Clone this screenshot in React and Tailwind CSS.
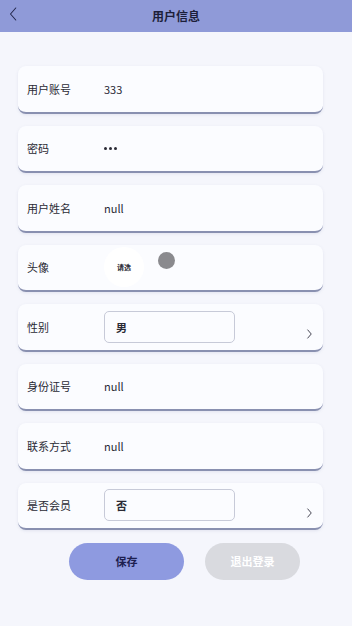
import React from "react";

const font = { fontFamily: '"Noto Sans CJK SC", "Noto Sans", sans-serif' };

function Chevron({ dir = "right", className = "", width = 1.6 }) {
  return (
    <svg viewBox="0 0 12 20" className={className} fill="none" stroke="currentColor" strokeWidth={width} strokeLinecap="round" strokeLinejoin="round">
      {dir === "right" ? <path d="M3 3l6 7-6 7" /> : <path d="M9 2L2 10l7 8" />}
    </svg>
  );
}

function Card({ label, children, arrow }) {
  return (
    <div className="relative h-[47.5px] rounded-[8px] bg-[#fbfcff] border-b-2 border-[#8990b0] shadow-[0_1px_3px_rgba(120,130,170,0.15)] flex items-center pl-[9px]">
      <span className="w-[77px] shrink-0 text-[11px] text-[#2a2a35]">{label}</span>
      <div className="flex-1 flex items-center text-[11px] text-[#2a2a35]">{children}</div>
      {arrow && <Chevron className="absolute right-[10px] top-[24px] w-[7px] h-[12px] text-[#3a3a48]" />}
    </div>
  );
}

function SelectBox({ value }) {
  return (
    <div className="w-[131px] h-[32px] rounded-[5px] border border-[#c7cad8] bg-[#fbfcff] flex items-center pl-[11px] text-[11px] font-bold text-[#2a2a35]">
      {value}
    </div>
  );
}

export default function App() {
  return (
    <div className="w-[352px] h-[626px] bg-[#f5f6fc] flex flex-col" style={font}>
      <div className="relative h-[32px] bg-[#8f9ad8] flex items-center justify-center shrink-0">
        <Chevron dir="left" width={1.4} className="absolute left-[9px] top-[6px] w-[9px] h-[16px] text-[#22254a]" />
        <span className="text-[12px] font-bold text-[#1d1f3a]">用户信息</span>
      </div>

      <div className="flex flex-col gap-[12px] px-[18px] mt-[34px] w-[341px]">
        <Card label="用户账号">333</Card>
        <Card label="密码">
          <div className="flex gap-[2px]">
            <span className="w-[3px] h-[3px] rounded-full bg-[#2a2a35]" />
            <span className="w-[3px] h-[3px] rounded-full bg-[#2a2a35]" />
            <span className="w-[3px] h-[3px] rounded-full bg-[#2a2a35]" />
          </div>
        </Card>
        <Card label="用户姓名">null</Card>
        <Card label="头像">
          <div className="w-[40px] h-[40px] rounded-full bg-white flex items-center justify-center text-[7px] font-bold text-[#2a2a35]">请选</div>
          <div className="ml-[14px] mb-[14px] w-[17px] h-[17px] rounded-full bg-[#8a8a8e]" />
        </Card>
        <Card label="性别" arrow><SelectBox value="男" /></Card>
        <Card label="身份证号">null</Card>
        <Card label="联系方式">null</Card>
        <Card label="是否会员" arrow><SelectBox value="否" /></Card>
      </div>

      <div className="flex mt-[13px] pl-[69px] gap-[21px]">
        <button className="w-[115px] h-[37px] rounded-full bg-[#8e9ae0] text-[11px] font-bold text-[#1d2050]">保存</button>
        <button className="w-[95px] h-[37px] rounded-full bg-[#d9dadf] text-[11px] font-bold text-white">退出登录</button>
      </div>
    </div>
  );
}
